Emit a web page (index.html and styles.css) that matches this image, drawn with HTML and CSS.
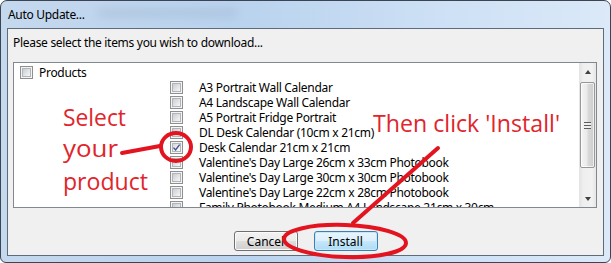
FILE: index.html
```html
<!DOCTYPE html>
<html lang="en">
<head>
    <meta charset="UTF-8">
    <title>Auto Update...</title>
    <link rel="stylesheet" href="styles.css">
</head>
<body>
    <div class="window">
        <div class="titlebar">
            <span class="title">Auto Update...</span>
            <span class="glass-shade"></span>
        </div>

        <div class="client">
            <p class="prompt">Please select the items you wish to download...</p>

            <div class="listbox">
                <ul class="tree">
                    <li class="node root"><span class="cb"></span><span>Products</span></li>
                    <li class="node child"><span class="cb"></span><span>A3 Portrait Wall Calendar</span></li>
                    <li class="node child"><span class="cb"></span><span>A4 Landscape Wall Calendar</span></li>
                    <li class="node child"><span class="cb"></span><span>A5 Portrait Fridge Portrait</span></li>
                    <li class="node child"><span class="cb"></span><span>DL Desk Calendar (10cm x 21cm)</span></li>
                    <li class="node child">
                        <span class="cb checked">
                            <svg width="9" height="9" viewBox="0 0 9 9"><path d="M1.5 4.6 L3.6 7 L7.6 1.6" fill="none" stroke="#3d4f8c" stroke-width="1.3"/></svg>
                        </span>
                        <span>Desk Calendar 21cm x 21cm</span>
                    </li>
                    <li class="node child"><span class="cb"></span><span>Valentine's Day Large 26cm x 33cm Photobook</span></li>
                    <li class="node child"><span class="cb"></span><span>Valentine's Day Large 30cm x 30cm Photobook</span></li>
                    <li class="node child"><span class="cb"></span><span>Valentine's Day Large 22cm x 28cm Photobook</span></li>
                    <li class="node child"><span class="cb"></span><span>Family Photobook Medium A4 Landscape 21cm x 30cm</span></li>
                </ul>

                <div class="scrollbar">
                    <div class="sb-btn"><span class="arrow-up"></span></div>
                    <div class="sb-track">
                        <div class="sb-thumb"><span class="grip"></span></div>
                    </div>
                    <div class="sb-btn"><span class="arrow-down"></span></div>
                </div>
            </div>

            <div class="buttons">
                <button class="btn">Cancel</button>
                <button class="btn default">Install</button>
            </div>
        </div>

        <!-- red hand-drawn notes on top of the dialog -->
        <svg class="annotations" width="611" height="263" viewBox="0 0 611 263">
            <text class="note" x="63" y="126" textLength="63" lengthAdjust="spacingAndGlyphs">Select</text>
            <text class="note" x="63" y="157" textLength="55" lengthAdjust="spacingAndGlyphs">your</text>
            <text class="note" x="63" y="190" textLength="85" lengthAdjust="spacingAndGlyphs">product</text>
            <text class="note" x="373" y="132" textLength="187" lengthAdjust="spacingAndGlyphs">Then click 'Install'</text>
            <g class="marks">
                <path d="M122 153 L160 146"/>
                <ellipse cx="176" cy="147" rx="15" ry="14"/>
                <path d="M438 148 L353 223"/>
                <ellipse cx="345" cy="241" rx="61" ry="16" transform="rotate(2 345 241)"/>
            </g>
        </svg>
    </div>
</body>
</html>
```

FILE: styles.css
```css
* {
    margin: 0;
    padding: 0;
    box-sizing: border-box;
}

html,
body {
    width: 611px;
    height: 263px;
    overflow: hidden;
}

body {
    font-family: "Noto Sans", "Open Sans", sans-serif;
    font-size: 12px;
    letter-spacing: -0.3px;
    color: #000;
    background: #fff;
}

.window {
    position: relative;
    width: 611px;
    height: 263px;
    border: 1px solid #3b4552;
    border-radius: 7px 7px 6px 6px;
    background: linear-gradient(90deg, #c4d8ee 0%, #bad3ee 40%, #cde0f5 72%, #dbe9f8 100%);
    padding: 0 6px 6px 6px;
    display: flex;
    flex-direction: column;
}

.titlebar {
    height: 27px;
    display: flex;
    align-items: center;
    padding-left: 1px;
}

.title {
    line-height: 16px;
}

.glass-shade {
    width: 140px;
    height: 10px;
    margin-left: 12px;
    margin-top: -3px;
    border-radius: 5px;
    background: rgba(90, 110, 140, 0.12);
    filter: blur(4px);
}

.client {
    flex: 1;
    border: 1px solid #5f6b78;
    background: #f0f0f0;
    display: flex;
    flex-direction: column;
}

.prompt {
    height: 33px;
    padding: 6px 0 0 5px;
    line-height: 16px;
}

.listbox {
    height: 146px;
    margin: 0 6px 0 5px;
    border: 1px solid #828790;
    background: #fff;
    display: flex;
}

.tree {
    flex: 1;
    list-style: none;
    padding-top: 2px;
    overflow: hidden;
}

.node {
    height: 15px;
    display: flex;
    align-items: center;
    white-space: nowrap;
    line-height: 15px;
}

.root {
    padding-left: 6px;
    gap: 6px;
}

.child {
    padding-left: 156px;
    gap: 16px;
}

.cb {
    flex: none;
    position: relative;
    width: 13px;
    height: 13px;
    border: 1px solid #8e8f8f;
    background: #f4f4f4;
    display: flex;
    align-items: center;
    justify-content: center;
}

.cb::before {
    content: "";
    position: absolute;
    inset: 1px;
    border: 1px solid #b1b5ba;
    background: linear-gradient(135deg, #c9cdd2 0%, #e3e4e6 55%, #f7f7f7 100%);
}

.cb.checked::before {
    background: linear-gradient(135deg, #d4d7db 0%, #eeeff0 55%, #fafafa 100%);
}

.cb svg {
    position: relative;
}

.scrollbar {
    width: 17px;
    display: flex;
    flex-direction: column;
    background: linear-gradient(90deg, #e3e3e3 0%, #efefef 25%, #f2f2f2 75%, #e6e6e6 100%);
}

.sb-btn {
    height: 17px;
    display: flex;
    align-items: center;
    justify-content: center;
}

.arrow-up,
.arrow-down {
    width: 1px;
    height: 0;
    border-left: 3px solid transparent;
    border-right: 3px solid transparent;
}

.arrow-up {
    border-bottom: 4px solid #404040;
}

.arrow-down {
    border-top: 4px solid #404040;
}

.sb-track {
    flex: 1;
    padding: 2px 0 0 1px;
}

.sb-thumb {
    width: 15px;
    height: 86px;
    border: 1px solid #979797;
    border-radius: 2px;
    background: linear-gradient(90deg, #f4f4f4 0%, #eaeaea 45%, #d9d9d9 55%, #cdcdcd 100%);
    box-shadow: inset 0 0 0 1px rgba(255, 255, 255, 0.7);
    display: flex;
    align-items: center;
    justify-content: center;
}

.grip {
    width: 7px;
    height: 7px;
    background: repeating-linear-gradient(180deg, #5d5d5d 0 1px, #eeeeee 1px 3px);
}

.buttons {
    margin-top: 23px;
    display: flex;
    justify-content: center;
    gap: 16px;
}

.btn {
    width: 64px;
    height: 20px;
    border: 1px solid #707070;
    border-radius: 3px;
    background: linear-gradient(#f2f2f2 0%, #ebebeb 48%, #dddddd 52%, #cfcfcf 100%);
    box-shadow: inset 0 0 0 1px #fbfbfb;
    font: inherit;
    color: #000;
}

.btn.default {
    border-color: #3c7fb1;
    background: linear-gradient(#e9f5fc 0%, #dbf0fc 48%, #c4e7fb 52%, #aedcf5 100%);
    box-shadow: inset 0 0 0 1px #c8e8fa;
}

.annotations {
    position: absolute;
    left: -1px;
    top: -1px;
    pointer-events: none;
}

.note {
    font-family: "Open Sans", sans-serif;
    font-size: 24px;
    letter-spacing: 0;
    fill: #e1252c;
}

.marks path,
.marks ellipse {
    fill: none;
    stroke: #e3141f;
    stroke-width: 4;
    stroke-linecap: round;
}
```
